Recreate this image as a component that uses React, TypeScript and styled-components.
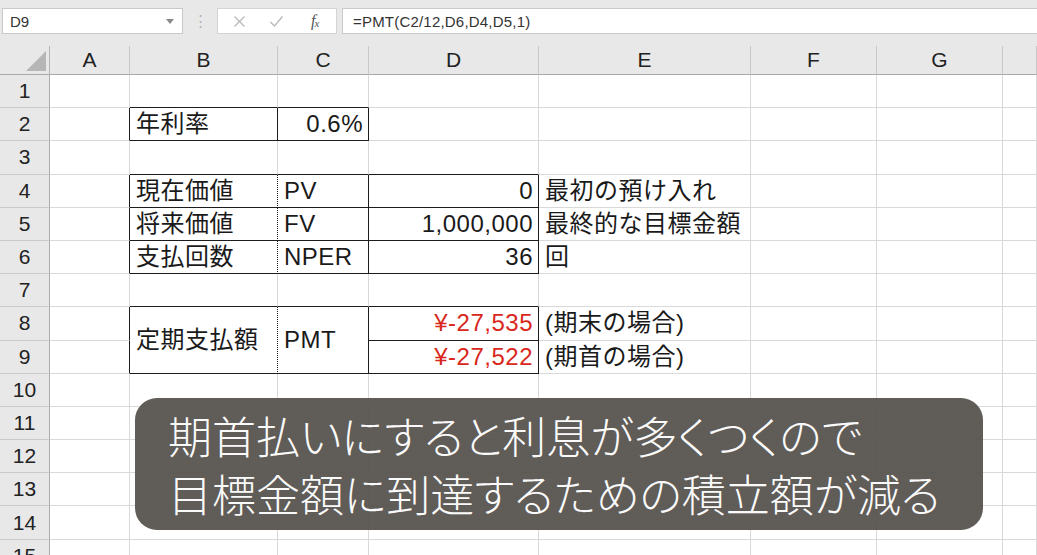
import React from 'react';
import styled, { createGlobalStyle } from 'styled-components';

const GlobalStyle = createGlobalStyle`
  html, body {
    margin: 0;
    padding: 0;
    background: #ffffff;
    overflow: hidden;
  }
  body {
    font-family: "Liberation Sans", "Noto Sans CJK JP", sans-serif;
  }
`;

const GRID = '#d9d9d9';
const INK = '#1c1c1c';

const Page = styled.div`
  position: relative;
  width: 1037px;
  height: 555px;
  overflow: hidden;
  background: #fff;
`;

/* ---------- formula bar ---------- */

const Toolbar = styled.div`
  display: flex;
  align-items: flex-start;
  height: 46px;
  box-sizing: border-box;
  padding: 8px 0 0 2px;
  background: #e8e8e8;
`;

const NameBox = styled.div`
  display: flex;
  align-items: center;
  justify-content: space-between;
  width: 181px;
  height: 26px;
  box-sizing: border-box;
  padding: 0 8px 0 7px;
  background: #fff;
  border: 1px solid #c9c9c9;
  font-size: 15px;
  color: #333;
`;

const Grip = styled.div`
  width: 34px;
  height: 26px;
  display: flex;
  align-items: center;
  justify-content: center;
  color: #b4b4b4;
  font-size: 15px;
`;

const FxBox = styled.div`
  display: flex;
  align-items: center;
  width: 120px;
  height: 26px;
  box-sizing: border-box;
  padding: 0 0 0 15px;
  gap: 23px;
  background: #fff;
  border: 1px solid #d4d4d4;
`;

const FxLabel = styled.span`
  font-family: "Liberation Serif", serif;
  font-style: italic;
  font-size: 16px;
  color: #555;
  margin-left: 4px;
  letter-spacing: -1px;
  sub {
    font-size: 11px;
    vertical-align: -1px;
  }
`;

const FormulaBox = styled.div`
  flex: 1;
  height: 26px;
  margin-left: 5px;
  margin-right: -2px;
  box-sizing: border-box;
  display: flex;
  align-items: center;
  padding-left: 10px;
  background: #fff;
  border: 1px solid #c9c9c9;
  font-size: 15px;
  color: #333;
  letter-spacing: 0.2px;
`;

/* ---------- sheet grid ---------- */

const Sheet = styled.div`
  display: grid;
  grid-template-columns: 50px 80px 148px 91px 170px 212px 126px 126px 1fr;
  grid-template-rows: 29px repeat(15, 33.2px);
`;

const Corner = styled.div`
  background: #e8e8e8;
  border-right: 1px solid #b4b4b4;
  border-bottom: 1px solid #a8a8a8;
  display: flex;
  align-items: flex-end;
  justify-content: flex-end;
  padding: 0 3px 3px 0;
`;

const ColHead = styled.div`
  background: #e8e8e8;
  border-right: 1px solid #c8c8c8;
  border-bottom: 1px solid #a8a8a8;
  display: flex;
  align-items: center;
  justify-content: center;
  font-size: 21px;
  color: #222;
`;

const RowHead = styled.div`
  background: #e8e8e8;
  border-right: 1px solid #acacac;
  border-bottom: 1px solid #cacaca;
  display: flex;
  align-items: center;
  justify-content: center;
  font-size: 21px;
  color: #222;
`;

type Edge = 'solid' | 'dotted' | undefined;

const edge = (e: Edge) =>
  e === 'solid' ? `1px solid ${INK}` : e === 'dotted' ? `1px dotted ${INK}` : `1px solid ${GRID}`;

const Cell = styled.div<{ $r?: Edge; $b?: Edge; $right?: boolean; $red?: boolean; $span?: boolean }>`
  min-width: 0;
  box-sizing: border-box;
  border-right: ${(p) => edge(p.$r)};
  border-bottom: ${(p) => edge(p.$b)};
  grid-row: ${(p) => (p.$span ? 'span 2' : 'auto')};
  display: flex;
  align-items: center;
  justify-content: ${(p) => (p.$right ? 'flex-end' : 'flex-start')};
  padding: 0 5px 0 6px;
  font-size: 24px;
  line-height: 1;
  white-space: nowrap;
  color: ${(p) => (p.$red ? '#d9271c' : '#1a1a1a')};
  letter-spacing: 0.5px;
`;

/* ---------- caption overlay ---------- */

const Caption = styled.div`
  position: absolute;
  left: 135px;
  top: 398px;
  width: 848px;
  height: 132px;
  box-sizing: border-box;
  padding: 8px 0 0 33px;
  border-radius: 22px;
  background: rgba(86, 82, 78, 0.94);
  color: #fafafa;
  font-family: "Noto Sans CJK JP", sans-serif;
  font-weight: 300;
  font-size: 44px;
  line-height: 58px;
  font-feature-settings: "palt";
`;

const CaptionLine = styled.div`
  white-space: nowrap;
`;

type CellSpec = {
  text?: string;
  r?: Edge;
  b?: Edge;
  right?: boolean;
  red?: boolean;
  span?: boolean;
  skip?: boolean;
};

const COLS = ['A', 'B', 'C', 'D', 'E', 'F', 'G', 'H'];

const cells: Record<string, CellSpec> = {
  // rate box
  B1: { b: 'solid' },
  C1: { b: 'solid' },
  A2: { r: 'solid' },
  B2: { text: '年利率', r: 'solid', b: 'solid' },
  C2: { text: '0.6%', right: true, r: 'solid', b: 'solid' },
  // inputs box
  B3: { b: 'solid' },
  C3: { b: 'solid' },
  D3: { b: 'solid' },
  A4: { r: 'solid' },
  B4: { text: '現在価値', r: 'dotted', b: 'solid' },
  C4: { text: 'PV', r: 'solid', b: 'solid' },
  D4: { text: '0', right: true, r: 'solid', b: 'solid' },
  E4: { text: '最初の預け入れ' },
  A5: { r: 'solid' },
  B5: { text: '将来価値', r: 'dotted', b: 'solid' },
  C5: { text: 'FV', r: 'solid', b: 'solid' },
  D5: { text: '1,000,000', right: true, r: 'solid', b: 'solid' },
  E5: { text: '最終的な目標金額' },
  A6: { r: 'solid' },
  B6: { text: '支払回数', r: 'dotted', b: 'solid' },
  C6: { text: 'NPER', r: 'solid', b: 'solid' },
  D6: { text: '36', right: true, r: 'solid', b: 'solid' },
  E6: { text: '回' },
  // payment box
  B7: { b: 'solid' },
  C7: { b: 'solid' },
  D7: { b: 'solid' },
  A8: { r: 'solid' },
  B8: { text: '定期支払額', r: 'dotted', b: 'solid', span: true },
  C8: { text: 'PMT', r: 'solid', b: 'solid', span: true },
  D8: { text: '¥-27,535', right: true, red: true, r: 'solid', b: 'solid' },
  E8: { text: '(期末の場合)' },
  A9: { r: 'solid' },
  B9: { skip: true },
  C9: { skip: true },
  D9: { text: '¥-27,522', right: true, red: true, r: 'solid', b: 'solid' },
  E9: { text: '(期首の場合)' },
};

const ROWS = Array.from({ length: 15 }, (_, i) => i + 1);

export default function App() {
  return (
    <Page>
      <GlobalStyle />
      <Toolbar>
        <NameBox>
          <span>D9</span>
          <svg width="8" height="5" viewBox="0 0 8 5">
            <path d="M0 0 L8 0 L4 5 Z" fill="#8a8a8a" />
          </svg>
        </NameBox>
        <Grip>⋮</Grip>
        <FxBox>
          <svg width="13" height="13" viewBox="0 0 13 13">
            <path d="M1.5 1.5 L11.5 11.5 M11.5 1.5 L1.5 11.5" stroke="#b8b8b8" strokeWidth="1.3" fill="none" />
          </svg>
          <svg width="15" height="13" viewBox="0 0 15 13">
            <path d="M1.5 7 L5.5 11 L13.5 1.5" stroke="#b8b8b8" strokeWidth="1.3" fill="none" />
          </svg>
          <FxLabel>
            f<sub>x</sub>
          </FxLabel>
        </FxBox>
        <FormulaBox>=PMT(C2/12,D6,D4,D5,1)</FormulaBox>
      </Toolbar>

      <Sheet>
        <Corner>
          <svg width="20" height="20" viewBox="0 0 20 20">
            <path d="M20 0 L20 20 L0 20 Z" fill="#b6b6b6" />
          </svg>
        </Corner>
        {COLS.map((c) => (
          <ColHead key={c}>{c === 'H' ? '' : c}</ColHead>
        ))}
        {ROWS.map((row) => (
          <React.Fragment key={row}>
            <RowHead>{row}</RowHead>
            {COLS.map((col) => {
              const spec = cells[`${col}${row}`] || {};
              if (spec.skip) return null;
              return (
                <Cell
                  key={col}
                  $r={spec.r}
                  $b={spec.b}
                  $right={spec.right}
                  $red={spec.red}
                  $span={spec.span}
                >
                  {spec.text}
                </Cell>
              );
            })}
          </React.Fragment>
        ))}
      </Sheet>

      <Caption>
        <CaptionLine>期首払いにすると利息が多くつくので</CaptionLine>
        <CaptionLine>目標金額に到達するための積立額が減る</CaptionLine>
      </Caption>
    </Page>
  );
}
